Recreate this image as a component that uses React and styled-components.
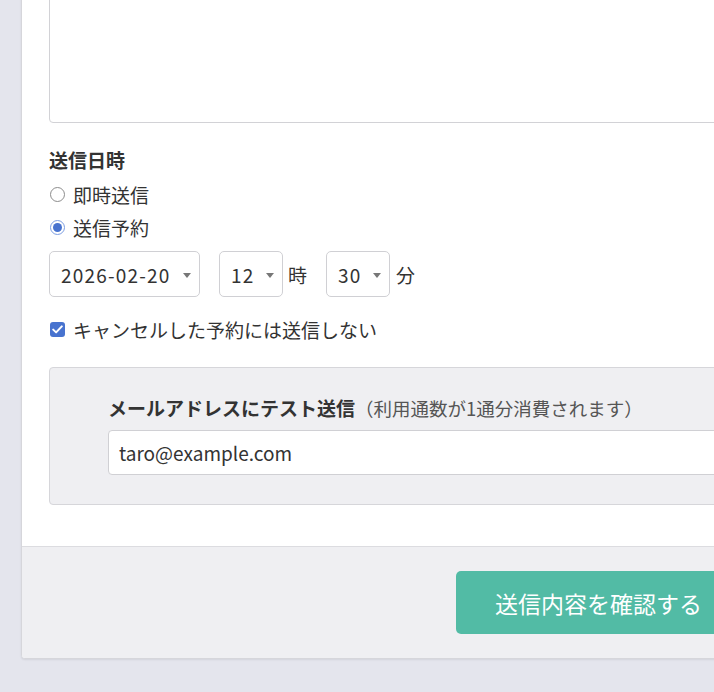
import React from "react";
import styled, { createGlobalStyle } from "styled-components";

const Global = createGlobalStyle`
  html, body { margin: 0; padding: 0; }
  body {
    background: #e4e5ed;
    font-family: "Noto Sans CJK JP", "Noto Sans", sans-serif;
    color: #333;
    overflow: hidden;
    width: 714px;
    height: 692px;
  }
`;

const Page = styled.div`
  padding-left: 21px;
  margin-top: -60px;
`;

const Card = styled.div`
  width: 750px;
  background: #fff;
  border: 1px solid #d6d6db;
  border-radius: 4px;
  box-shadow: 0 1px 2px rgba(0, 0, 0, 0.08);
  overflow: hidden;
`;

const Body = styled.div`
  padding: 0 0 41px 27px;
`;

const TextArea = styled.div`
  height: 180px;
  border: 1px solid #d2d2d6;
  border-radius: 4px;
  background: #fff;
`;

const SectionLabel = styled.div`
  margin-top: 23px;
  font-size: 19px;
  line-height: 28px;
  font-weight: 700;
  color: #333;
`;

const OptionRow = styled.label`
  display: flex;
  align-items: center;
  gap: 8px;
  height: 33px;
  font-size: 19px;
  color: #333;
`;

const RadioMark = styled.span`
  box-sizing: border-box;
  width: 15px;
  height: 15px;
  border-radius: 50%;
  border: 1px solid ${(p) => (p.$checked ? "#7c9ee2" : "#8c8c8c")};
  background: #fff;
  display: flex;
  align-items: center;
  justify-content: center;
  margin-left: 1px;
  &::after {
    content: "";
    width: 9px;
    height: 9px;
    border-radius: 50%;
    background: ${(p) => (p.$checked ? "#4873cf" : "transparent")};
  }
`;

const Radios = styled.div`
  margin-top: 4px;
`;

const DateRow = styled.div`
  display: flex;
  align-items: center;
  margin-top: 7px;
  font-size: 19px;
  color: #333;
`;

const Select = styled.div`
  box-sizing: border-box;
  width: ${(p) => p.$w}px;
  height: 46px;
  border: 1px solid #d0d0d4;
  border-radius: 5px;
  background: #fff;
  display: flex;
  align-items: center;
  justify-content: space-between;
  padding: 0 8px 0 11px;
  margin-right: ${(p) => p.$mr}px;
  font-size: 19px;
  letter-spacing: 1.2px;
  color: #333;
`;

const Caret = styled.span`
  width: 0;
  height: 0;
  border-left: 4px solid transparent;
  border-right: 4px solid transparent;
  border-top: 5px solid #777;
  margin-top: 2px;
`;

const Unit = styled.span`
  margin-right: ${(p) => p.$mr}px;
`;

const CheckRow = styled.label`
  display: flex;
  align-items: center;
  gap: 8px;
  margin-top: 17px;
  height: 30px;
  font-size: 19px;
  color: #333;
`;

const CheckMark = styled.span`
  width: 15px;
  height: 15px;
  border-radius: 3px;
  background: #4873cf;
  display: flex;
  align-items: center;
  justify-content: center;
  margin-left: 1px;
`;

const TestBox = styled.div`
  margin-top: 23px;
  background: #efeff2;
  border: 1px solid #d6d6da;
  border-radius: 4px;
  padding: 26px 0 29px 58px;
`;

const TestLabel = styled.div`
  font-size: 19px;
  line-height: 28px;
  color: #333;
  margin-bottom: 8px;
`;

const Strong = styled.span`
  font-weight: 700;
`;

const Note = styled.span`
  color: #555;
  font-size: 18.5px;
`;

const Input = styled.div`
  box-sizing: border-box;
  height: 45px;
  background: #fff;
  border: 1px solid #d0d0d4;
  border-radius: 4px;
  display: flex;
  align-items: center;
  padding-left: 10px;
  font-size: 19px;
  color: #333;
`;

const Footer = styled.div`
  background: #efeff2;
  border-top: 1px solid #dcdce0;
  padding: 24px 31px 24px 0;
  display: flex;
  justify-content: flex-end;
`;

const Button = styled.button`
  height: 63px;
  padding: 0 39px;
  border: none;
  border-radius: 5px;
  background: #52bba5;
  color: #fff;
  font-family: inherit;
  font-size: 23px;
  cursor: pointer;
`;

export default function App() {
  return (
    <>
      <Global />
      <Page>
        <Card>
          <Body>
            <TextArea />
            <SectionLabel>送信日時</SectionLabel>
            <Radios>
              <OptionRow>
                <RadioMark />
                即時送信
              </OptionRow>
              <OptionRow>
                <RadioMark $checked />
                送信予約
              </OptionRow>
            </Radios>
            <DateRow>
              <Select $w={151} $mr={19}>
                2026-02-20
                <Caret />
              </Select>
              <Select $w={64} $mr={5}>
                12
                <Caret />
              </Select>
              <Unit $mr={19}>時</Unit>
              <Select $w={64} $mr={6}>
                30
                <Caret />
              </Select>
              <Unit $mr={0}>分</Unit>
            </DateRow>
            <CheckRow>
              <CheckMark>
                <svg width="11" height="9" viewBox="0 0 11 9">
                  <path
                    d="M1.2 4.6 L4.1 7.4 L9.8 1.4"
                    fill="none"
                    stroke="#fff"
                    strokeWidth="2"
                    strokeLinecap="round"
                    strokeLinejoin="round"
                  />
                </svg>
              </CheckMark>
              キャンセルした予約には送信しない
            </CheckRow>
            <TestBox>
              <TestLabel>
                <Strong>メールアドレスにテスト送信</Strong>
                <Note>（利用通数が1通分消費されます）</Note>
              </TestLabel>
              <Input>taro@example.com</Input>
            </TestBox>
          </Body>
          <Footer>
            <Button>送信内容を確認する</Button>
          </Footer>
        </Card>
      </Page>
    </>
  );
}
